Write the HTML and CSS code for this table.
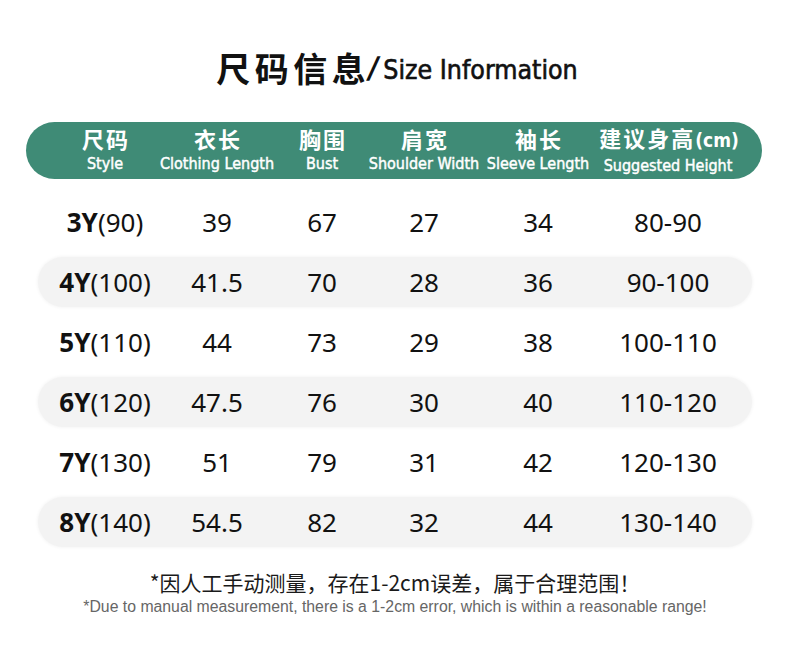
FILE: index.html
```html
<!DOCTYPE html>
<html lang="zh-CN">
<head>
<meta charset="utf-8">
<title>尺码信息 / Size Information</title>
<link rel="stylesheet" href="styles.css">
</head>
<body>
<div class="page">
  <h1 class="title"><span class="title-cn">尺码信息</span><span class="title-slash">/</span><span class="title-en">Size Information</span></h1>

  <div class="head-bar">
    <div class="cols">
      <div class="hcell"><span class="cn">尺码</span><span class="en">Style</span></div>
      <div class="hcell"><span class="cn">衣长</span><span class="en">Clothing Length</span></div>
      <div class="hcell"><span class="cn">胸围</span><span class="en">Bust</span></div>
      <div class="hcell"><span class="cn">肩宽</span><span class="en">Shoulder Width</span></div>
      <div class="hcell"><span class="cn">袖长</span><span class="en">Sleeve Length</span></div>
      <div class="hcell"><span class="cn">建议身高<small>(cm)</small></span><span class="en">Suggested Height</span></div>
    </div>
  </div>

  <div class="rows">
    <div class="row cols"><div class="cell"><b>3Y</b>(90)</div><div class="cell">39</div><div class="cell">67</div><div class="cell">27</div><div class="cell">34</div><div class="cell">80-90</div></div>
    <div class="row cols shade"><div class="cell"><b>4Y</b>(100)</div><div class="cell">41.5</div><div class="cell">70</div><div class="cell">28</div><div class="cell">36</div><div class="cell">90-100</div></div>
    <div class="row cols"><div class="cell"><b>5Y</b>(110)</div><div class="cell">44</div><div class="cell">73</div><div class="cell">29</div><div class="cell">38</div><div class="cell">100-110</div></div>
    <div class="row cols shade"><div class="cell"><b>6Y</b>(120)</div><div class="cell">47.5</div><div class="cell">76</div><div class="cell">30</div><div class="cell">40</div><div class="cell">110-120</div></div>
    <div class="row cols"><div class="cell"><b>7Y</b>(130)</div><div class="cell">51</div><div class="cell">79</div><div class="cell">31</div><div class="cell">42</div><div class="cell">120-130</div></div>
    <div class="row cols shade"><div class="cell"><b>8Y</b>(140)</div><div class="cell">54.5</div><div class="cell">82</div><div class="cell">32</div><div class="cell">44</div><div class="cell">130-140</div></div>
  </div>

  <div class="note">
    <p class="note-cn">*因人工手动测量，存在1-2cm误差，属于合理范围！</p>
    <p class="note-en">*Due to manual measurement, there is a 1-2cm error, which is within a reasonable range!</p>
  </div>
</div>
</body>
</html>
```

FILE: styles.css
```css
* { box-sizing: border-box; }
html, body { margin: 0; padding: 0; background: #fff; }
body { font-family: "Noto Sans", "Noto Sans CJK SC", sans-serif; color: #111; }
.page { width: 790px; height: 647px; padding-top: 47px; }

.title {
  margin: 0;
  height: 40px;
  display: flex;
  justify-content: center;
  align-items: center;
  font-weight: normal;
  color: #111;
}
.title-cn {
  font-family: "Noto Sans CJK SC", sans-serif;
  font-weight: 700;
  font-size: 34px;
  letter-spacing: 4.5px;
  margin-left: 4px;
}
.title-slash {
  font-family: "DejaVu Sans", sans-serif;
  font-weight: 700;
  font-size: 30px;
  margin: 0 4px 0 -2px;
  transform: skewX(-8deg);
}
.title-en {
  font-family: "DejaVu Sans Condensed", "DejaVu Sans", sans-serif;
  font-stretch: condensed;
  font-weight: 400;
  font-size: 26.5px;
  -webkit-text-stroke: 0.6px #111;
  margin-top: 4px;
}

.cols {
  display: grid;
  grid-template-columns: 112px 112px 98px 106px 122px 138px;
  align-items: center;
}

.head-bar {
  margin: 35px 0 0 26px;
  width: 736px;
  height: 57px;
  border-radius: 29px;
  background: #3f8b76;
  color: #fff;
  padding: 1px 25px 0 23px;
  display: flex;
  align-items: center;
}
.hcell {
  display: flex;
  flex-direction: column;
  align-items: center;
  white-space: nowrap;
}
.hcell .cn {
  font-family: "Noto Sans CJK SC", sans-serif;
  font-weight: 700;
  font-size: 22px;
  line-height: 24px;
  letter-spacing: 2px;
  margin-right: -2px;
  margin-top: -3px;
}
.hcell .cn small {
  font-family: "DejaVu Sans Condensed", "DejaVu Sans", sans-serif;
  font-size: 19px;
  font-weight: 700;
  letter-spacing: 0;
}
.hcell .en {
  font-family: "DejaVu Sans Condensed", "DejaVu Sans", sans-serif;
  font-stretch: condensed;
  font-weight: 400;
  font-size: 16px;
  -webkit-text-stroke: 0.45px #fff;
  line-height: 18px;
  margin-top: 5px;
}

.rows {
  margin: 18px 0 0 38px;
  width: 714px;
  display: flex;
  flex-direction: column;
  gap: 10px;
}
.row {
  height: 50px;
  padding: 0 15px 0 11px;
  border-radius: 25px;
}
.row.shade {
  background: #f3f3f3;
  box-shadow: 0 0 3px 1px #f6f6f6;
}
.cell {
  text-align: center;
  font-size: 26px;
  line-height: 50px;
  color: #111;
  white-space: nowrap;
}
.cell b { font-weight: 700; }

.note {
  margin-top: 21px;
  text-align: center;
}
.note p { margin: 0; }
.note-cn {
  font-family: "Noto Sans CJK SC", sans-serif;
  font-size: 21px;
  line-height: 28px;
  color: #1a1a1a;
}
.note-en {
  font-family: "Liberation Sans", Arial, sans-serif;
  font-size: 15.8px;
  line-height: 22px;
  color: #666;
}
```
